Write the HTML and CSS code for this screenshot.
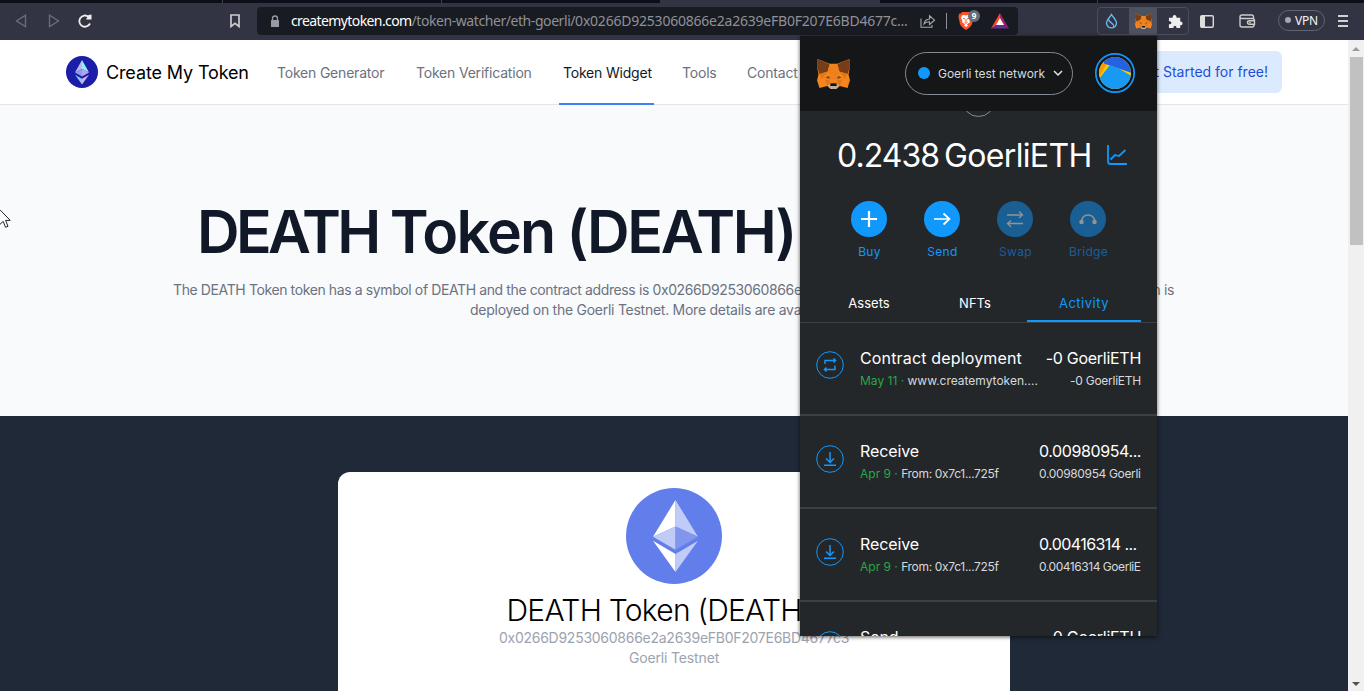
FILE: index.html
```html
<!DOCTYPE html>
<html lang="en">
<head>
<meta charset="utf-8">
<title>Create My Token</title>
<link rel="stylesheet" href="styles.css">
</head>
<body>
<div class="window">
  <div class="tabstrip"><i class="tab t1"></i><i class="tab t2"></i><i class="tab t3"></i><i class="tab active"></i><i class="tab t5"></i><i class="tab t6"></i></div>
  <div class="toolbar">
    <svg class="nav-ico" viewBox="0 0 14 14"><path d="M10.500 1.200V12.600L1.500 7Z"/></svg>
    <svg class="nav-ico fwd" viewBox="0 0 14 14"><path d="M1.500 1.200V12.600L10.500 7Z"/></svg>
    <svg class="reload" viewBox="0 0 16 16"><path d="M13 10.500A5.600 5.600 0 1 1 11.500 3.800" fill="none" stroke="#eee" stroke-width="1.800"/><path d="M9 6.500h5.500V1.500L11.500 2Z" fill="#eee"/></svg>
    <svg class="bookmark" viewBox="0 0 12 16"><path d="M2 2h8v11.500L6 10.300 2 13.500Z" fill="none" stroke="#ccc" stroke-width="1.700"/></svg>
    <div class="urlbar">
      <svg class="lock" viewBox="0 0 10 13"><path d="M2.500 6V3.500a2.500 2.500 0 0 1 5 0V6" fill="none" stroke="#989ba3" stroke-width="1.300"/><rect x="1" y="5" width="8" height="7" rx=".6" fill="#989ba3"/></svg>
      <span class="url"><b>createmytoken.com</b>/token-watcher/eth-goerli/<span class="hex">0x0266D9253060866e2a2639eFB0F207E6BD4677c...</span></span>
      <svg class="share" viewBox="0 0 16 14"><path d="M1 4.500V13.200H12V11M4 10C4.500 6.500 6.500 5.200 9.500 5V1.800L14.600 6.200 9.500 10.500V7.800C7 7.800 5.500 8.300 4 10Z" fill="none" stroke="#a7a9ae" stroke-width="1.100"/></svg>
      <i class="sep"></i>
      <div class="shield">
        <svg viewBox="0 0 16 18"><path d="M4 0h8l1 1.500L15 1.700 15.500 5 14 12Q13 15 8 18 3 15 2 12L.500 5 1 1.700 3 1.500Z" fill="#fb542b"/><path d="M4 3.500 6 3l2 .500L10 3l2 .500L13 6l-1.500 3 .5 1.200L9 12.200l1 1.300-2 1.500-2-1.500 1-1.300-3-2L4.500 9 3 6Z" fill="#fff"/><path d="M5 6.300 7 7M11 6.300 9 7M8 7v3M6.500 10.300 8 11.300 9.500 10.300" stroke="#fb542b" fill="none"/></svg>
        <em>9</em>
      </div>
      <svg class="bat" viewBox="0 0 18 16"><path d="M9 0 0 15.500 9 11Z" fill="#ff4724"/><path d="M9 0 18 15.500 9 9Z" fill="#9e1f63"/><path d="M0 15.500H18L9 9Z" fill="#662d91"/><path d="M9 5 13 12H5Z" fill="#fff"/></svg>
    </div>
    <div class="exts">
      <div class="ext"><svg viewBox="0 0 14 17"><path d="M7 1.500C5 5 1.600 7.500 1.600 10.500a5.400 5.400 0 0 0 10.800 0C12.400 7.500 9 5 7 1.500Z" fill="none" stroke="#68b8ed" stroke-width="1.500"/><path d="M4 6.800C4 10.500 9.500 10 9.800 15" fill="none" stroke="#68b8ed" stroke-width="1.500"/></svg></div>
      <div class="ext on"><svg viewBox="0 0 34 32"><use href="#fox"/></svg></div>
      <div class="ext"><svg viewBox="0 0 16 16"><path d="M1 4H5V3a2 2 0 0 1 4 0v1h4v4h.500a2 2 0 0 1 0 4H13v3H9v-1a1.600 1.600 0 0 0-3.200 0v1H1V11h1a1.600 1.600 0 0 0 0-3.200H1Z" fill="#eee"/></svg></div>
    </div>
    <svg class="side" viewBox="0 0 14 13"><rect x=".7" y=".7" width="12.600" height="11.600" rx="1.200" fill="none" stroke="#ddd" stroke-width="1.400"/><path d="M1 1h4v11H1Z" fill="#ddd"/></svg>
    <svg class="wallet" viewBox="0 0 17 14"><path d="M14.500 4.500V3Q14.500 1 12.500 1H3Q1 1 1 3V11Q1 13 3 13H13Q15 13 15 11V10.500M1 3Q1 4.500 3 4.500H13Q15.500 4.500 15.500 6.500V10.200H10.500Q8.500 10.200 8.500 8.500T10.500 6.800H15.500" fill="none" stroke="#ccc" stroke-width="1.400"/><circle cx="11" cy="8.500" r=".8" fill="#ddd"/></svg>
    <div class="vpn"><i></i>VPN</div>
    <div class="burger"><i></i><i></i><i></i></div>
  </div>
  <div class="body">
    <main class="page">
      <header class="header">
        <svg class="logo" viewBox="0 0 32 32"><circle cx="16" cy="16" r="16" fill="#1b1ea8"/><path d="M16 4 9 16.500 16 13Z" fill="#c6b2ef"/><path d="M16 4 23 16.500 16 13Z" fill="#8ef2ee"/><path d="M9 16.500 16 13V20.500Z" fill="#8c9df0"/><path d="M23 16.500 16 13V20.500Z" fill="#b8a2ed"/><path d="M9 18.700 16 22.800V28.500Z" fill="#87c9f4"/><path d="M23 18.700 16 22.800V28.500Z" fill="#ceb3ee"/></svg>
        <span class="brand">Create My Token</span>
        <nav class="menu"><a class="m1">Token Generator</a><a class="m2">Token Verification</a><a class="m3 cur">Token Widget</a><a class="m4">Tools</a><a class="m5">Contact</a></nav>
        <a class="cta">Get Started for free!</a>
      </header>
      <section class="hero">
        <h1><span class="w1">DEATH</span> <span class="w2">Token</span> <span class="w3">(DEATH)</span></h1>
        <p><span class="l1">The DEATH Token token has a symbol of DEATH and the contract address is 0x0266D9253060866e2a26</span><span class="tail">token is</span></p>
        <p class="second">deployed on the Goerli Testnet. More details are available below.</p>
      </section>
      <section class="dark">
        <div class="card">
          <svg class="eth" viewBox="0 0 32 32"><circle cx="16" cy="16" r="16" fill="#627eea"/><path d="M16.500 4 9 16.220 16.500 12.870Z" fill="#fff"/><path d="M16.500 4V12.870L24 16.220Z" fill="#c0cbf7"/><path d="M16.500 12.870 9 16.220 16.500 20.570Z" fill="#c0cbf7"/><path d="M16.500 12.870V20.570L24 16.220Z" fill="#8197ee"/><path d="M9 17.620 16.500 21.970V27.990Z" fill="#fff"/><path d="M24 17.620 16.500 21.970V27.990Z" fill="#c0cbf7"/></svg>
          <h2>DEATH Token (DEATH)</h2>
          <div class="addr">0x0266D9253060866e2a2639eFB0F207E6BD4677c3</div>
          <div class="net">Goerli Testnet</div>
        </div>
      </section>
    </main>
    <div class="scroll"><i class="up"></i><div class="thumb"></div><i class="down"></i></div>
  </div>

  <aside class="popup">
    <div class="ptop">
      <svg class="fox" viewBox="0 0 34 32"><g id="fox"><path d="M.500 1 13 6H21L33.500 1 34 9 32.500 17 34 23 31.500 31 23.500 29 20 32H14L10.500 29 2.500 31 0 23 1.500 17 0 9Z" fill="#f6851b"/><path d="M.500 1 13 6.500 11 14 2.500 16.500 0 9ZM33.500 1 21 6.500 23 14 31.500 16.500 34 9Z" fill="#763d16"/><path d="M2.500 16.500 11 14 5 22ZM31.500 16.500 23 14 29 22Z" fill="#e2761b"/><path d="M11 14 13 6.500H21L23 14 20 22H14Z" fill="#ee811c"/><path d="M10.500 29 8 22 13 23 14 27ZM23.500 29 26 22 21 23 20 27Z" fill="#e2761b"/><path d="M8.500 20.500 12 18.500 13.500 21.500ZM25.500 20.500 22 18.500 20.500 21.500Z" fill="#65433b"/><path d="M11 28 14 26H20L23 28 20 32H14Z" fill="#c0ad9e"/><path d="M14 26H20L20.500 29H13.500Z" fill="#161616"/></g></svg>
      <div class="network"><i></i><span>Goerli test network</span><svg viewBox="0 0 10 6"><path d="M1 1 5 5 9 1" fill="none" stroke="#e3e5e8" stroke-width="1.500"/></svg></div>
      <svg class="avatar" viewBox="0 0 40 40"><clipPath id="disc"><circle cx="20" cy="20" r="16"/></clipPath><circle cx="20" cy="20" r="19.200" fill="#141618" stroke="#1098fc" stroke-width="1.700"/><g clip-path="url(#disc)"><path d="M0 0H40V40H0Z" fill="#facc05"/><path d="M0 0H12V11L4 24H0Z" fill="#f79c05"/><path d="M9 10.500 38 20.500V0H9Z" fill="#2362e1"/><path d="M14.500 12.500 22 14.500 40 25V40H0V31Z" fill="#1899f3"/></g></svg>
    </div>
    <div class="pbody">
      <i class="ring"></i>
      <div class="balance"><span class="amt">0.2438</span><span class="unit">GoerliETH</span><svg viewBox="0 0 20 20"><path d="M1 0V16.500Q1 19 3.500 19H20M3.500 14.500 8 10 12 11 18.500 5" fill="none" stroke="#1098fc" stroke-width="1.800"/></svg></div>
      <div class="actions">
        <div class="act"><svg viewBox="0 0 36 36"><circle cx="18" cy="18" r="18"/><path d="M18 10V26M10 18H26" stroke-width="2.200"/></svg><span>Buy</span></div>
        <div class="act"><svg viewBox="0 0 36 36"><circle cx="18" cy="18" r="18"/><path d="M10 18H25.500M19.500 12.500 25.500 18 19.500 23.500" stroke-width="1.700"/></svg><span>Send</span></div>
        <div class="act off"><svg viewBox="0 0 36 36"><circle cx="18" cy="18" r="18"/><path d="M10 14H25.500M22 10.500 25.500 14 22 17M26 22.500H10.500M14 19.500 10.500 22.500 14 26" stroke-width="1.300"/></svg><span>Swap</span></div>
        <div class="act off"><svg viewBox="0 0 36 36"><circle cx="18" cy="18" r="18"/><path d="M11.500 21C12 11.500 24 11.500 25 21" stroke-width="1.500"/><path d="M11.500 21h.01M24.500 21h.01" stroke-width="4.500" stroke-linecap="round"/></svg><span>Bridge</span></div>
      </div>
      <div class="tabs"><span class="p1">Assets</span><span class="p2">NFTs</span><span class="p3">Activity</span></div>
      <div class="row first">
        <svg class="rico" viewBox="0 0 28 28"><circle cx="14" cy="14" r="13.300"/><path d="M9 13V9.500H19.500M17.500 7.500 19.500 9.500 17.500 11.500M19 14.500V18.500H8.500M10.500 16.500 8.500 18.500 10.500 20.500" stroke-width="1.500"/></svg>
        <div class="desc"><b class="r1">Contract deployment</b><div class="sub"><em>May 11 ·</em> <span>www.createmytoken....</span></div></div>
        <div class="val"><b class="v1">-0 GoerliETH</b><span class="v2">-0 GoerliETH</span></div>
      </div>
      <div class="row">
        <svg class="rico" viewBox="0 0 28 28"><circle cx="14" cy="14" r="13.300"/><path d="M14 7V17M10 13.500 14 17.500 18 13.500M8 20.300H20" stroke-width="1.500"/></svg>
        <div class="desc"><b class="r2">Receive</b><div class="sub s2"><em>Apr 9 ·</em> <span>From: 0x7c1...725f</span></div></div>
        <div class="val left"><b class="v3">0.00980954...</b><span class="v4">0.00980954 Goerli</span></div>
      </div>
      <div class="row">
        <svg class="rico" viewBox="0 0 28 28"><circle cx="14" cy="14" r="13.300"/><path d="M14 7V17M10 13.500 14 17.500 18 13.500M8 20.300H20" stroke-width="1.500"/></svg>
        <div class="desc"><b class="r2">Receive</b><div class="sub s2"><em>Apr 9 ·</em> <span>From: 0x7c1...725f</span></div></div>
        <div class="val left"><b class="v5">0.00416314 ...</b><span class="v6">0.00416314 GoerliE</span></div>
      </div>
      <div class="row">
        <svg class="rico" viewBox="0 0 28 28"><circle cx="14" cy="14" r="13.300"/><path d="M9 19 19 9M12 9H19V16" stroke-width="1.500"/></svg>
        <div class="desc"><b class="r2">Send</b></div>
        <div class="val"><b class="v7">-0 GoerliETH</b></div>
      </div>
    </div>
  </aside>
  <svg class="cursor" viewBox="0 0 12 20"><path d="M0 .8 10.200 11.400H5.600L8 17.300 5.600 18.300 3.200 12.400 0 15.300" fill="#fff" stroke="#222" stroke-width="1"/></svg>
</div>
</body>
</html>
```
FILE: styles.css
```css
* { box-sizing: border-box; }
body { margin: 0; font-family: Inter, "Liberation Sans", sans-serif; }
b, em { font-weight: inherit; font-style: normal; }
svg { display: block; flex: none; overflow: visible; }
i { display: block; flex: none; }
h1, h2, p { margin: 0; }

.window { position: relative; width: 1364px; height: 691px; overflow: hidden; display: flex; flex-direction: column; }
.tabstrip { height: 3px; background: #0d0e17; display: flex; flex: none; }
.tab { height: 3px; border-right: 1px solid #3d3e48; }
.t1 { width: 223px; }
.t2 { width: 219px; }
.t3 { width: 218px; border: 0; }
.tab.active { width: 220px; background: #323443; border: 0; }
.t5 { width: 218px; }
.t6 { width: 266px; border: 0; }

.toolbar { height: 37px; flex: none; background: #323443; display: flex; align-items: center; padding: 0 11px 1px 15px; }
.nav-ico { width: 14px; height: 14px; fill: none; stroke: #6c6e7b; stroke-width: 1.3; }
.nav-ico.fwd { margin-left: 19px; }
.reload { width: 16px; height: 16px; margin-left: 15px; }
.bookmark { width: 12px; height: 16px; margin-left: 136px; margin-right: 16px; }
.urlbar { width: 761px; height: 28px; background: #191b22; border-radius: 4px; display: flex; align-items: center; padding-left: 13px; }
.lock { width: 10px; height: 13px; margin-right: 11px; }
.url { width: 617px; font: 14px/20px "Noto Sans", sans-serif; color: #8f9197; white-space: nowrap; letter-spacing: -.43px; }
.url b { color: #fff; letter-spacing: -.6px; }
.url .hex { letter-spacing: -.22px; }
.share { width: 16px; height: 14px; margin-left: 12px; }
.sep { width: 1px; height: 16px; background: #8f9197; margin: 0 11px 0 10px; }
.shield { position: relative; width: 16px; height: 18px; }
.shield svg { width: 16px; height: 18px; }
.shield em { position: absolute; left: 10px; top: -2px; width: 12px; height: 12px; border-radius: 6px; background: #686b7a; color: #fff; font: bold 8px/12px "Noto Sans", sans-serif; text-align: center; }
.bat { width: 18px; height: 16px; margin-left: 17px; }
.exts { width: 92px; height: 28px; margin-left: 79px; border: 1px solid #4b4d5a; border-radius: 4px; display: flex; }
.ext { width: 31px; display: flex; align-items: center; justify-content: center; }
.ext:first-child svg { width: 13px; height: 16px; margin-right: 4px; }
.ext.on { background: #4e515e; width: 28px; margin: -1px 0; border-radius: 3px; }
.ext.on svg { width: 17px; height: 16px; }
.ext:last-child svg { width: 15px; height: 15px; margin-left: 5px; }
.side { width: 14px; height: 13px; margin-left: 11px; }
.wallet { width: 17px; height: 14px; margin-left: 25px; }
.vpn { width: 47px; height: 21px; margin: 0 13px 2px 22px; border: 1px solid #62646f; border-radius: 11px; display: flex; align-items: center; justify-content: center; gap: 4px; font: 12px/19px "Noto Sans", sans-serif; color: #f4f4f6; letter-spacing: -.2px; }
.vpn i { width: 6px; height: 6px; border-radius: 3px; background: #a5a7b3; }
.burger { width: 10px; display: grid; gap: 3px; }
.burger i { height: 2px; background: #d2d2d6; }

.body { flex: 1; display: flex; min-height: 0; }
.page { width: 1348px; display: flex; flex-direction: column; }
.header { height: 65px; flex: none; border-bottom: 1px solid #e3e5ea; background: #fff; display: flex; align-items: center; padding: 0 66px; }
.logo { width: 32px; height: 32px; }
.brand { width: 144px; margin: 0 27px 0 8px; font-size: 18px; letter-spacing: -.13px; color: #000; white-space: nowrap; }
.menu { display: flex; align-self: stretch; font-size: 14px; letter-spacing: -.2px; line-height: 65px; color: #6b7280; white-space: nowrap; }
.m1 { width: 139px; }
.m2 { width: 143px; }
.m3 { width: 95px; margin-right: 28px; padding-left: 4px; }
.m4 { width: 65px; }
.m5 { width: 60px; }
.cur { color: #111827; border-bottom: 2px solid #3b82f6; height: 65px; }
.cta { margin-left: auto; height: 42px; line-height: 42px; padding: 0 14px 0 17px; background: #dbeafe; border-radius: 6px; color: #1d4ed8; font-size: 14px; white-space: nowrap; }
.hero { height: 311px; flex: none; background: #f9fafc; padding-top: 97px; }
.hero h1 { padding-left: 197px; font-size: 59px; line-height: 60px; font-weight: 600; letter-spacing: -2.6px; color: #111827; white-space: nowrap; }
.w1 { letter-spacing: -3.7px; }
.w2 { letter-spacing: -1.8px; }
.w3 { letter-spacing: -2.3px; }
.hero p { display: flex; height: 20px; padding: 0 174px 0 173px; justify-content: space-between; font-size: 14px; letter-spacing: -.39px; line-height: 20px; color: #6b7280; white-space: nowrap; margin-top: 18px; }
.hero .second { margin: 0; padding-left: 470px; justify-content: flex-start; letter-spacing: -.26px; }
.dark { flex: 1; background: #1f2937; padding: 56px 338px 0; }
.card { height: 240px; background: #fff; border-radius: 12px; padding-top: 16px; display: flex; flex-direction: column; align-items: center; white-space: nowrap; }
.eth { width: 96px; height: 96px; }
.card h2 { font-size: 30px; line-height: 36px; font-weight: 300; margin-top: 8px; color: #000; letter-spacing: -.75px; padding-right: 30px; }
.addr, .net { font-size: 14px; line-height: 20px; color: #9ca3af; letter-spacing: -.26px; }
.net { letter-spacing: -.15px; }
.scroll { width: 16px; background: #f0f0f0; display: flex; flex-direction: column; align-items: center; }
.up, .down { border: 4px solid transparent; }
.up { border-bottom-color: #9b9b9b; margin-top: 3px; }
.thumb { width: 13px; height: 188px; margin-top: 6px; background: #c1c1c1; }
.down { border-top-color: #505050; margin: auto 0 1px; }

.popup { position: absolute; left: 800px; top: 36px; width: 357px; height: 600px; background: #24272a; color: #fff; box-shadow: 0 1px 4px rgba(0,0,0,.65); overflow: hidden; white-space: nowrap; }
.ptop { height: 75px; background: #141618; display: flex; align-items: center; padding: 0 22px 1px 17px; }
.fox { width: 33px; height: 31px; }
.network { width: 168px; height: 43px; margin: 0 22px 0 55px; border: 1px solid #848c96; border-radius: 22px; display: flex; align-items: center; padding-left: 12px; font-size: 12px; color: #d6d9dc; letter-spacing: -.04px; }
.network i { width: 12px; height: 12px; border-radius: 6px; background: #1098fc; margin-right: 8px; }
.network span { width: 115px; }
.network svg { width: 10px; height: 6px; }
.avatar { width: 40px; height: 40px; }
.pbody { height: 525px; position: relative; overflow: hidden; }
.ring { position: absolute; left: 162px; top: -27px; width: 33px; height: 33px; border: 1px solid #848c96; border-radius: 50%; }
.balance { height: 88px; display: flex; align-items: center; padding-left: 37px; font-size: 32px; }
.amt { width: 107px; letter-spacing: -.95px; }
.unit { width: 163px; letter-spacing: -.65px; }
.balance svg { width: 20px; height: 20px; }
.actions { display: flex; justify-content: center; gap: 21px; padding-top: 2px; width: 357px; }
.act { width: 52px; display: flex; flex-direction: column; align-items: center; font-size: 12px; color: #1098fc; line-height: 20px; gap: 5px; letter-spacing: .3px; }
.act span { padding-left: 1px; }
.act svg { width: 36px; height: 36px; fill: none; stroke: #fff; }
.act circle { fill: #1098fc; stroke: none; }
.act.off { opacity: .5; }
.tabs { height: 41px; margin-top: 20px; border-bottom: 1px solid #3b4046; display: flex; font-size: 13px; line-height: 42px; text-align: center; }
.tabs .p1 { width: 114px; margin-left: 12px; }
.tabs .p2 { width: 98px; }
.tabs .p3 { width: 114px; margin-left: 3px; border-bottom: 2px solid #1098fc; color: #1098fc; height: 40px; letter-spacing: .5px; }
.row { height: 93px; border-bottom: 2px solid #3b4046; display: flex; padding: 23px 16px 0; }
.rico { width: 28px; height: 28px; margin: 6px 16px 0 0; fill: none; stroke: #1098fc; }
.first .rico { margin-top: 5px; }
.desc { flex: 1; }
.row b { display: block; font-size: 16px; line-height: 24px; }
.row .r1 { letter-spacing: .16px; }
.row .r2 { letter-spacing: -.1px; }
.row .v1, .row .v7 { letter-spacing: -.28px; }
.row .v3 { letter-spacing: -.4px; }
.row .v5 { letter-spacing: -.58px; }
.sub, .val span { display: block; font-size: 12px; line-height: 20px; margin-top: 1px; color: #d6d9dc; }
.sub em { color: #28a745; }
.s2 span { letter-spacing: -.32px; }
.val .v2 { letter-spacing: -.25px; }
.val .v4 { letter-spacing: -.35px; }
.val .v6 { letter-spacing: -.45px; }
.val { text-align: right; }
.val.left { width: 102px; text-align: left; }
.cursor { position: absolute; left: 0; top: 209px; width: 12px; height: 20px; }
```
